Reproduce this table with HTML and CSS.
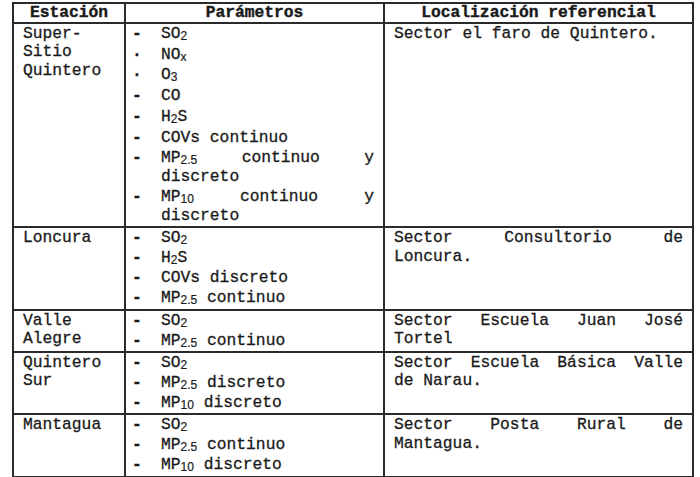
FILE: index.html
```html
<!DOCTYPE html>
<html lang="es">
<head>
<meta charset="utf-8">
<title>Estaciones de monitoreo</title>
<link rel="stylesheet" href="styles.css">
</head>
<body>
<table class="tabla">
  <colgroup>
    <col class="c-est">
    <col class="c-par">
    <col class="c-loc">
  </colgroup>
  <thead>
    <tr>
      <th>Estación</th>
      <th>Parámetros</th>
      <th>Localización referencial</th>
    </tr>
  </thead>
  <tbody>
    <tr class="r1">
      <td class="est">Super-Sitio Quintero</td>
      <td class="par">
        <ul class="lista lista-amplia">
          <li><span class="bul">-</span><span class="txt">SO<sub>2</sub></span></li>
          <li><span class="bul dot">·</span><span class="txt">NO<sub>x</sub></span></li>
          <li><span class="bul dot">·</span><span class="txt">O<sub>3</sub></span></li>
          <li><span class="bul">-</span><span class="txt">CO</span></li>
          <li><span class="bul">-</span><span class="txt">H<sub>2</sub>S</span></li>
          <li><span class="bul">-</span><span class="txt">COVs continuo</span></li>
          <li><span class="bul">-</span><span class="txt">MP<sub>2.5</sub> continuo y discreto</span></li>
          <li><span class="bul">-</span><span class="txt">MP<sub>10</sub> continuo y discreto</span></li>
        </ul>
      </td>
      <td class="loc">Sector el faro de Quintero.</td>
    </tr>
    <tr class="r2">
      <td class="est">Loncura</td>
      <td class="par">
        <ul class="lista">
          <li><span class="bul">-</span><span class="txt">SO<sub>2</sub></span></li>
          <li><span class="bul">-</span><span class="txt">H<sub>2</sub>S</span></li>
          <li><span class="bul">-</span><span class="txt">COVs discreto</span></li>
          <li><span class="bul">-</span><span class="txt">MP<sub>2.5</sub> continuo</span></li>
        </ul>
      </td>
      <td class="loc">Sector Consultorio de Loncura.</td>
    </tr>
    <tr class="r3">
      <td class="est">Valle Alegre</td>
      <td class="par">
        <ul class="lista">
          <li><span class="bul">-</span><span class="txt">SO<sub>2</sub></span></li>
          <li><span class="bul">-</span><span class="txt">MP<sub>2.5</sub> continuo</span></li>
        </ul>
      </td>
      <td class="loc">Sector Escuela Juan José Tortel</td>
    </tr>
    <tr class="r4">
      <td class="est">Quintero Sur</td>
      <td class="par">
        <ul class="lista">
          <li><span class="bul">-</span><span class="txt">SO<sub>2</sub></span></li>
          <li><span class="bul">-</span><span class="txt">MP<sub>2.5</sub> discreto</span></li>
          <li><span class="bul">-</span><span class="txt">MP<sub>10</sub> discreto</span></li>
        </ul>
      </td>
      <td class="loc">Sector Escuela Básica Valle de Narau.</td>
    </tr>
    <tr class="r5">
      <td class="est">Mantagua</td>
      <td class="par">
        <ul class="lista">
          <li><span class="bul">-</span><span class="txt">SO<sub>2</sub></span></li>
          <li><span class="bul">-</span><span class="txt">MP<sub>2.5</sub> continuo</span></li>
          <li><span class="bul">-</span><span class="txt">MP<sub>10</sub> discreto</span></li>
        </ul>
      </td>
      <td class="loc">Sector Posta Rural de Mantagua.</td>
    </tr>
  </tbody>
</table>
</body>
</html>
```
FILE: styles.css
```css
html, body {
  margin: 0;
  padding: 0;
  background: #ffffff;
}

body {
  font-family: "Liberation Mono", "Courier New", monospace;
  color: #1a1a1a;
}

.tabla {
  border-collapse: collapse;
  table-layout: fixed;
  width: 680px;
  margin: 2px 0 0 12px;
  font-size: 16.3px;
  line-height: 18.4px;
  -webkit-text-stroke: 0.3px #1a1a1a;
}

.c-est { width: 112px; }
.c-par { width: 259px; }
.c-loc { width: 309px; }

.tabla th,
.tabla td {
  border: 2px solid #2a2a2a;
  vertical-align: top;
  padding: 1px 9px 1px 9px;
}

.tabla th {
  font-weight: bold;
  text-align: center;
  line-height: 18px;
  padding: 0 4px 0 4px;
  -webkit-text-stroke: 0.4px #1a1a1a;
}

.est {
  padding-left: 9px;
}

.loc {
  text-align: justify;
}

.tabla td.par {
  padding-left: 6px;
  padding-right: 9px;
}

.lista {
  list-style: none;
  margin: 0;
  padding: 0;
  display: flex;
  flex-direction: column;
  gap: 1.6px;
}

.lista-amplia {
  gap: 2.3px;
}

.lista li {
  display: flex;
}

.bul {
  flex: 0 0 29px;
  font-weight: bold;
}

.txt {
  flex: 1;
  text-align: justify;
}

sub {
  font-family: "Liberation Sans", Arial, sans-serif;
  font-size: 12px;
  line-height: 0;
  vertical-align: -2px;
  -webkit-text-stroke: 0.2px #1a1a1a;
}
```
